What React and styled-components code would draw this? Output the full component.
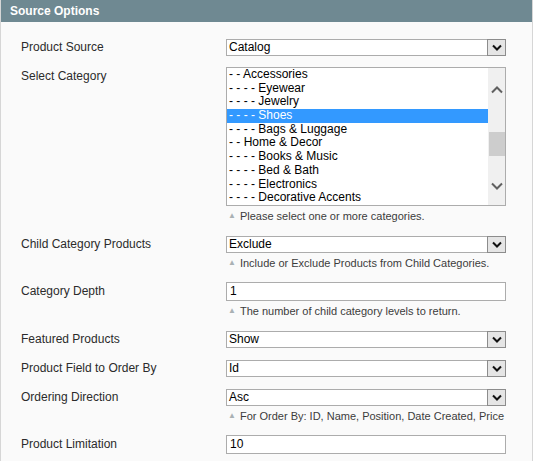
import React from "react";
import styled, { createGlobalStyle } from "styled-components";

const Global = createGlobalStyle`
  html, body { margin: 0; padding: 0; background: #fafafa; }
  body { font-family: "Liberation Sans", Arial, sans-serif; font-size: 12px; color: #2f2f2f; }
`;

const Panel = styled.div`
  width: 533px;
  height: 461px;
  box-sizing: border-box;
  border-left: 1px solid #d6d6d6;
  border-right: 1px solid #d6d6d6;
  background: #fafafa;
  overflow: hidden;
`;

const Header = styled.div`
  height: 22px;
  background: #6f8992;
  color: #fff;
  font-weight: bold;
  font-size: 12px;
  line-height: 22px;
  padding-left: 10px;
  margin-left: -1px;
  margin-right: -1px;
`;

const Body = styled.div`
  padding: 17px 0 0 20px;
  display: flex;
  flex-direction: column;
`;

const Row = styled.div`
  display: grid;
  grid-template-columns: 205px 280px;
  align-items: start;
  margin-bottom: ${(p) => p.$gap ?? 12}px;
`;

const Label = styled.div`
  font-size: 12px;
  line-height: ${(p) => p.$lh || 17}px;
  color: #2b2b2b;
`;

const Field = styled.div`
  display: flex;
  flex-direction: column;
`;

const SelectBox = styled.div`
  height: 17px;
  box-sizing: border-box;
  border: 1px solid #acacac;
  background: #fff;
  display: flex;
  align-items: stretch;
`;

const SelectText = styled.div`
  flex: 1;
  font-size: 12px;
  line-height: 15px;
  padding-left: 2px;
  color: #000;
`;

const DropBtn = styled.div`
  width: 19px;
  margin: -1px -1px -1px 0;
  box-sizing: border-box;
  border: 1px solid #8c8c8c;
  background: #e5e5e5;
  display: flex;
  align-items: center;
  justify-content: center;
`;

const TextInput = styled.div`
  height: 19px;
  box-sizing: border-box;
  border: 1px solid #acacac;
  background: #fff;
  font-size: 12px;
  line-height: 17px;
  padding-left: 3px;
  color: #000;
`;

const ListBox = styled.div`
  height: 139px;
  box-sizing: border-box;
  border: 1px solid #acacac;
  background: #fff;
  display: flex;
`;

const Options = styled.div`
  flex: 1;
  display: flex;
  flex-direction: column;
`;

const Option = styled.div`
  height: 13.7px;
  font-size: 12px;
  line-height: 13.7px;
  padding-left: 2px;
  white-space: pre;
  color: ${(p) => (p.$selected ? "#fff" : "#000")};
  background: ${(p) => (p.$selected ? "#3399ff" : "transparent")};
`;

const ScrollBar = styled.div`
  width: 17px;
  background: #f0f0f0;
  display: flex;
  flex-direction: column;
  align-items: center;
  padding: 18px 0 15px;
  box-sizing: border-box;
`;

const Track = styled.div`
  flex: 1;
  align-self: stretch;
  display: flex;
  flex-direction: column;
`;

const Thumb = styled.div`
  margin-top: 38px;
  height: 24px;
  background: #cdcdcd;
  margin-left: 1px;
`;

const Note = styled.div`
  margin-top: 3px;
  font-size: 11px;
  line-height: 14px;
  color: #3c3c3c;
  display: flex;
  align-items: center;
  padding-left: 2px;
  white-space: nowrap;
`;

const Tri = styled.span`
  color: #a9b1b4;
  font-size: 8px;
  margin-right: 4px;
  line-height: 14px;
`;

const Chevron = ({ up, color = "#111", w = 9, h = 5 }) => (
  <svg width={w + 2} height={h + 3} viewBox={`0 0 ${w + 2} ${h + 3}`}>
    <polyline
      points={
        up
          ? `1,${h + 1.5} ${(w + 2) / 2},1.5 ${w + 1},${h + 1.5}`
          : `1,1.5 ${(w + 2) / 2},${h + 1.5} ${w + 1},1.5`
      }
      fill="none"
      stroke={color}
      strokeWidth="2"
    />
  </svg>
);

const Select = ({ value }) => (
  <SelectBox>
    <SelectText>{value}</SelectText>
    <DropBtn>
      <Chevron w={8} h={4} />
    </DropBtn>
  </SelectBox>
);

const categories = [
  "- - Accessories",
  "- - - - Eyewear",
  "- - - - Jewelry",
  "- - - - Shoes",
  "- - - - Bags & Luggage",
  "- - Home & Decor",
  "- - - - Books & Music",
  "- - - - Bed & Bath",
  "- - - - Electronics",
  "- - - - Decorative Accents",
];

export default function App() {
  return (
    <>
      <Global />
      <Panel>
        <Header>Source Options</Header>
        <Body>
          <Row $gap={11}>
            <Label>Product Source</Label>
            <Select value="Catalog" />
          </Row>
          <Row $gap={13}>
            <Label $lh={19}>Select Category</Label>
            <Field>
              <ListBox>
                <Options>
                  {categories.map((c) => (
                    <Option key={c} $selected={c === "- - - - Shoes"}>
                      {c}
                    </Option>
                  ))}
                </Options>
                <ScrollBar>
                  <Chevron up color="#606060" w={10} h={5} />
                  <Track>
                    <Thumb />
                  </Track>
                  <Chevron color="#606060" w={10} h={5} />
                </ScrollBar>
              </ListBox>
              <Note>
                <Tri>▲</Tri>Please select one or more categories.
              </Note>
            </Field>
          </Row>
          <Row $gap={12}>
            <Label>Child Category Products</Label>
            <Field>
              <Select value="Exclude" />
              <Note>
                <Tri>▲</Tri>Include or Exclude Products from Child Categories.
              </Note>
            </Field>
          </Row>
          <Row $gap={13}>
            <Label $lh={19}>Category Depth</Label>
            <Field>
              <TextInput>1</TextInput>
              <Note>
                <Tri>▲</Tri>The number of child category levels to return.
              </Note>
            </Field>
          </Row>
          <Row>
            <Label>Featured Products</Label>
            <Select value="Show" />
          </Row>
          <Row>
            <Label>Product Field to Order By</Label>
            <Select value="Id" />
          </Row>
          <Row $gap={12}>
            <Label>Ordering Direction</Label>
            <Field>
              <Select value="Asc" />
              <Note>
                <Tri>▲</Tri>For Order By: ID, Name, Position, Date Created, Price
              </Note>
            </Field>
          </Row>
          <Row>
            <Label $lh={19}>Product Limitation</Label>
            <TextInput>10</TextInput>
          </Row>
        </Body>
      </Panel>
    </>
  );
}
